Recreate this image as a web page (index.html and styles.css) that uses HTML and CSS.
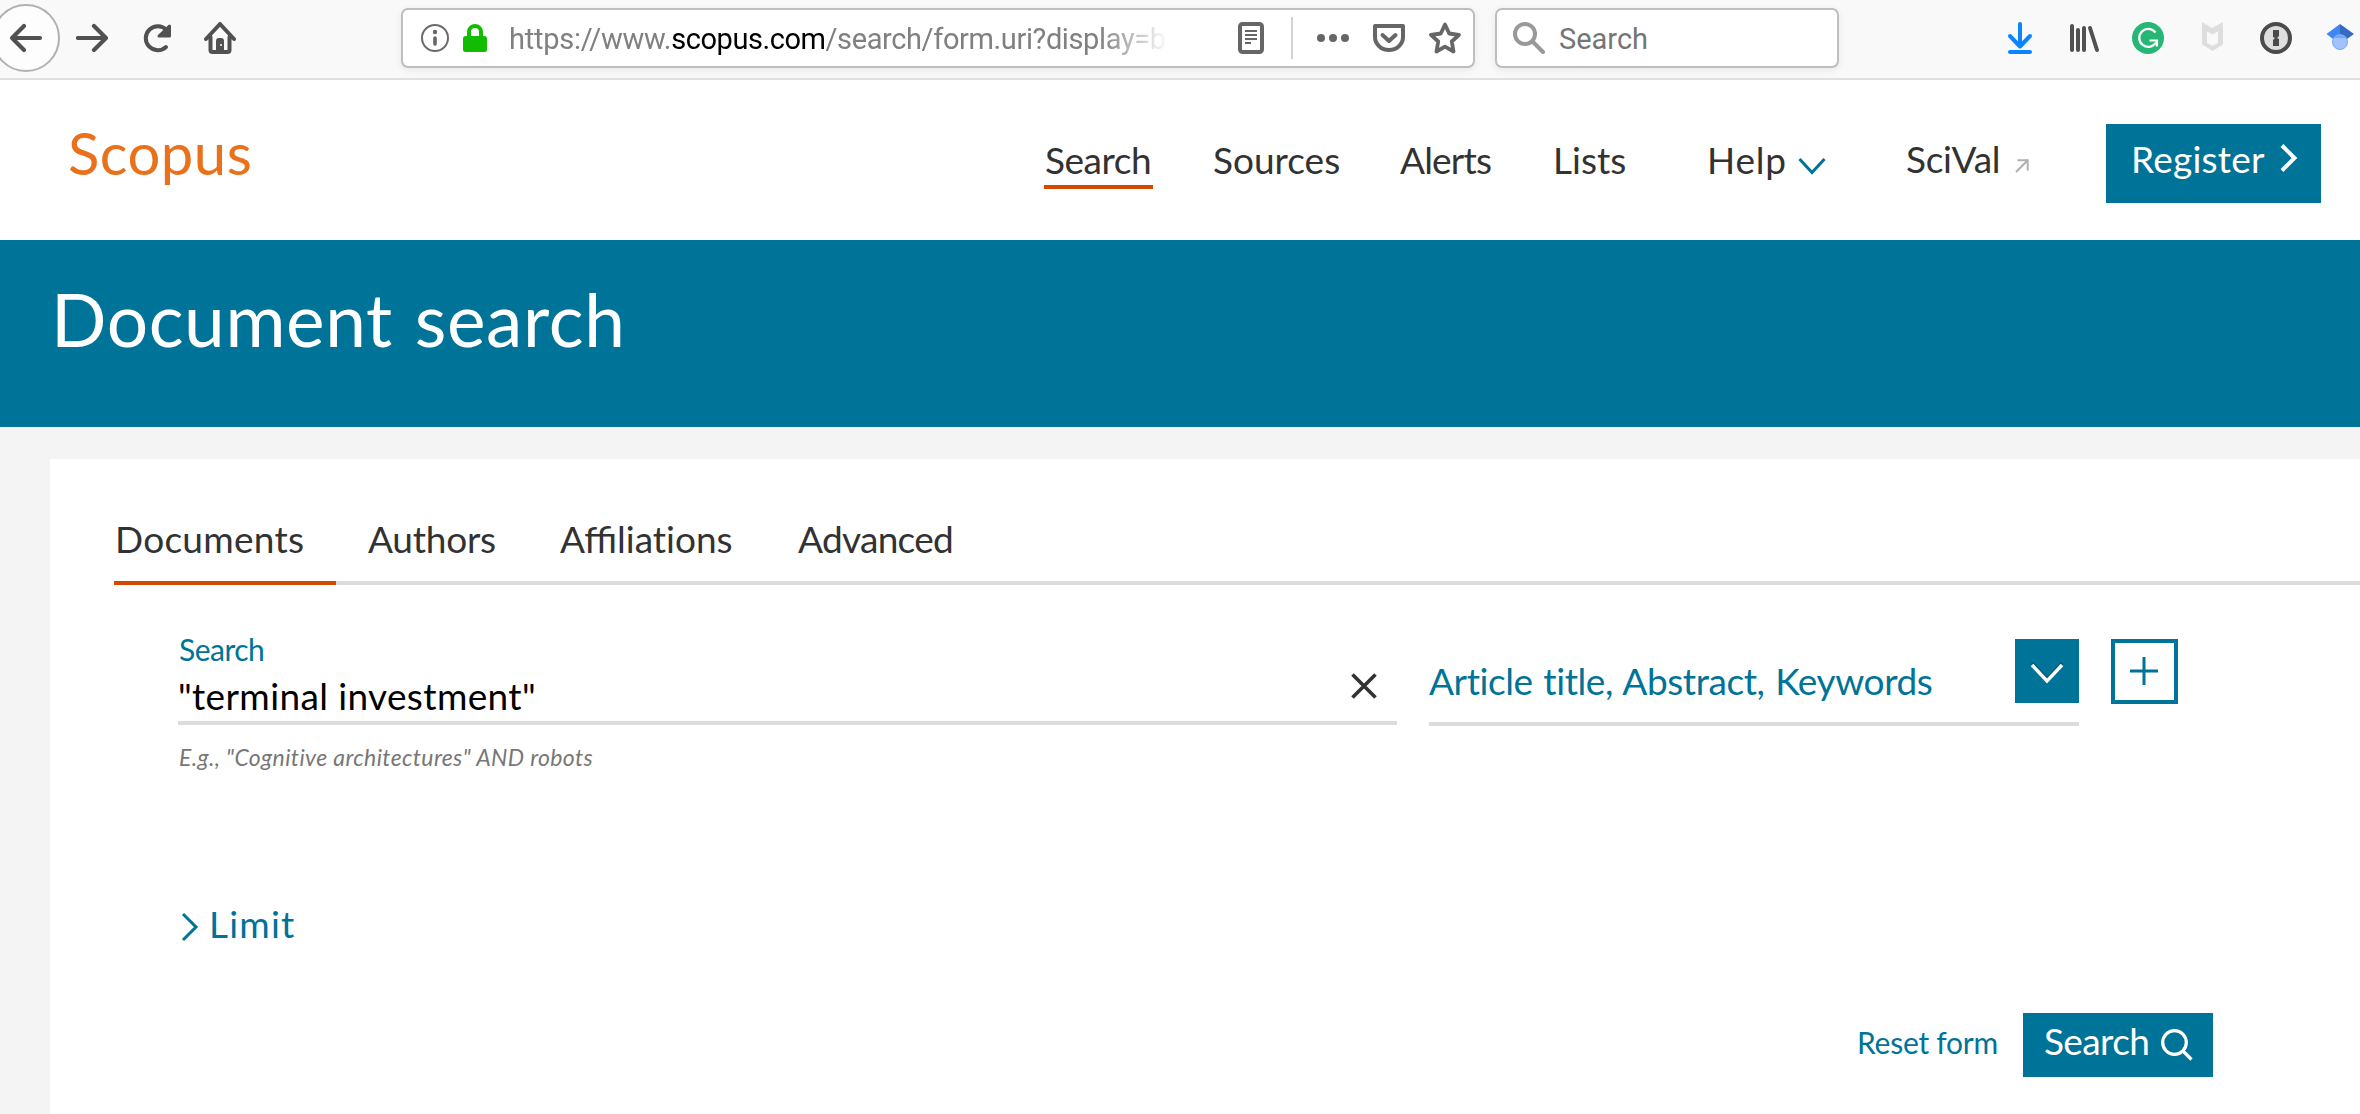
FILE: index.html
```
<!DOCTYPE html>
<html lang="en">
<head>
<meta charset="utf-8">
<title>Scopus - Document search</title>
<link rel="stylesheet" href="styles.css">
</head>
<body>
<div class="toolbar">
  <div class="history">
    <svg class="back" width="60" height="78" viewBox="0 0 60 78" fill="none"><circle cx="26" cy="38" r="33" fill="#fdfdfd" stroke="#b1b1b1" stroke-width="2"/><path d="M40 38H13M24 26L12 38l12 12" stroke="#515151" stroke-width="4.2" stroke-linecap="round" stroke-linejoin="round"/></svg>
    <svg class="forward" width="32" height="32" viewBox="0 0 32 32" fill="none" stroke="#515151" stroke-width="4.2" stroke-linecap="round" stroke-linejoin="round"><path d="M2 16h27M18 4l12 12-12 12"/></svg>
    <svg class="reload" width="32" height="32" viewBox="0 0 32 32" fill="none" stroke="#515151" stroke-width="4" stroke-linecap="round"><path d="M25 25A12 12 0 1 1 25.5 8"/><path d="M28.500 4v10H18z" fill="#515151" stroke-linejoin="round" stroke-width="3"/></svg>
    <svg class="home" width="32" height="32" viewBox="0 0 32 32"><path d="M2 17L16 2l14 15M6.500 15v13q0 2 2 2h15q2 0 2-2V15" fill="none" stroke="#515151" stroke-width="4" stroke-linecap="round" stroke-linejoin="round"/><path d="M12 30V19q0-3 3-3h2q3 0 3 3v11z" fill="#515151"/><circle cx="17" cy="23" r="1" fill="#fff"/></svg>
  </div>
  <div class="urlbar">
    <svg class="info" width="28" height="28" viewBox="0 0 28 28"><circle cx="14" cy="14" r="13" fill="none" stroke="#6b6b6b" stroke-width="2"/><circle cx="14" cy="8" r="2.200" fill="#666"/><path d="M14 14v6" stroke="#666" stroke-width="3.600" stroke-linecap="round"/></svg>
    <svg class="lock" width="24" height="28" viewBox="0 0 24 28"><path d="M6 14V8a6 6 0 0 1 12 0v6" fill="none" stroke="#12bc00" stroke-width="4"/><rect y="12" width="24" height="16" rx="2.500" fill="#12bc00"/></svg>
    <div class="address"><span class="scheme">https://www.</span><span class="domain">scopus.com</span><span class="path">/search/form.uri?display=b</span></div>
    <svg class="reader" width="26" height="32" viewBox="0 0 26 32" fill="none" stroke="#666"><rect x="2" y="2" width="22" height="28" rx="2.500" stroke-width="4"/><path d="M7 9h12M7 13h12M7 17h12M7 21h6" stroke-width="2"/></svg>
    <i class="divider"></i>
    <svg class="dots" width="32" height="32" viewBox="0 0 32 32" fill="#666"><circle cx="4" cy="16" r="4"/><circle cx="16" cy="16" r="4"/><circle cx="28" cy="16" r="4"/></svg>
    <svg class="pocket" width="32" height="32" viewBox="0 0 32 32" fill="none" stroke="#666" stroke-width="4" stroke-linejoin="round" stroke-linecap="round"><path d="M2 4h28v11a14 13 0 0 1-28 0z"/><path d="M9.500 13l6.500 6 6.500-6"/></svg>
    <svg class="star" width="32" height="32" viewBox="0 0 32 32" fill="none" stroke="#666" stroke-width="3.800" stroke-linejoin="round"><path d="M16 2.500l4.200 9 9.800 1.300-7.200 6.700 1.700 10L16 24.700l-8.500 4.800 1.700-10L2 12.800l9.800-1.300z"/></svg>
  </div>
  <div class="searchbar">
    <svg width="32" height="32" viewBox="0 0 32 32" fill="none" stroke="#999" stroke-width="4" stroke-linecap="round"><circle cx="12" cy="12" r="10"/><path d="M20 20l10 10"/></svg>
    <span>Search</span>
  </div>
  <div class="extensions">
    <svg width="32" height="32" viewBox="0 0 32 32" fill="none" stroke="#0a84ff" stroke-width="4" stroke-linecap="round" stroke-linejoin="round"><path d="M16 2v22M6 14l10 10.500L26 14M6 30h20"/></svg>
    <svg width="32" height="32" viewBox="0 0 32 32" fill="none" stroke="#515151" stroke-width="4" stroke-linecap="round"><path d="M4 4v24M10 8v20M16 6v22M22 6l7 22"/></svg>
    <svg width="32" height="32" viewBox="0 0 32 32" fill="none"><circle cx="16" cy="16" r="16" fill="#26b774"/><path d="M23.500 10.500A9 9 0 1 0 24 20.500M17.500 18.500H25v6" stroke="#fff" stroke-width="2.200"/></svg>
    <svg width="32" height="32" viewBox="0 0 32 32" fill="#dedede"><path d="M6 0l10 6L27 0v18.500l-5 2.500V9.500L16.500 12.500 11 9.500V21l-5-2.500zM6 18l10.500 6L27 18v4.500L16.500 29 6 22.500z"/></svg>
    <svg width="32" height="32" viewBox="0 0 32 32"><circle cx="16" cy="16" r="14" fill="#dedede" stroke="#4b4b4b" stroke-width="4"/><path d="M13 8h6v6l-2 2 2 1v7h-6v-6l2-2-2-1z" fill="#4b4b4b"/></svg>
    <svg width="32" height="32" viewBox="0 0 32 32"><path d="M2.500 12L16 2v18l-7-3z" fill="#4285f4"/><path d="M30 12L16 2v18l7-3z" fill="#356ac3"/><circle cx="16" cy="20" r="7.500" fill="#a0c3ff" stroke="#76a7fa" stroke-width="1"/><path d="M9.500 16a8 8 0 0 1 13 0z" fill="#76a7fa"/></svg>
  </div>
</div>

<header class="site-header">
  <a class="logo">Scopus</a>
  <nav class="main-nav">
    <a class="nav-item active">Search</a>
    <a class="nav-item sources">Sources</a>
    <a class="nav-item alerts">Alerts</a>
    <a class="nav-item">Lists</a>
    <a class="nav-item help">Help<svg width="28" height="18" viewBox="0 0 28 18" fill="none" stroke="#007398" stroke-width="3"><path d="M1.500 2L14 15.500 26.500 2"/></svg></a>
    <a class="nav-item scival">SciVal<svg width="14" height="14" viewBox="0 0 14 14" fill="none" stroke="#b0b0b0" stroke-width="2"><path d="M1 13L12.500 1.500M2.500 1.300h10.200v10.200"/></svg></a>
  </nav>
  <a class="register">Register<svg width="18" height="28" viewBox="0 0 18 28" fill="none" stroke="#fff" stroke-width="4"><path d="M2 1.500L14.500 14 2 26.500"/></svg></a>
</header>

<section class="banner"><h1>Document search</h1></section>

<main class="page">
  <section class="panel">
    <div class="tabs">
      <a class="tab selected">Documents</a>
      <a class="tab authors">Authors</a>
      <a class="tab">Affilia&zwnj;t&zwnj;ions</a>
      <a class="tab advanced">Advanced</a>
    </div>
    <form class="form">
      <div class="query">
        <div class="term">
          <label class="label">Search</label>
          <div class="value"><span>"terminal investment"</span><svg width="26" height="26" viewBox="0 0 26 26" stroke="#323232" stroke-width="3.600"><path d="M1.500 1.500l23 23M24.500 1.500l-23 23"/></svg></div>
          <p class="hint">E.g., "Cognitive architectures" AND robots</p>
        </div>
        <div class="scope">
          <span>Article title, Abstract, Keywords</span>
          <div class="drop"><svg width="34" height="22" viewBox="0 0 34 22" fill="none"><path d="M2 1l15 16L32 1" stroke="#00546f" stroke-width="3"/><path d="M2 3l15 16L32 3" stroke="#fff" stroke-width="3.400"/></svg></div>
        </div>
        <div class="add"><svg width="28" height="28" viewBox="0 0 28 28" stroke="#007398" stroke-width="3"><path d="M14 0v28M0 14h28"/></svg></div>
      </div>
      <div class="limit"><svg width="18" height="30" viewBox="0 0 18 30" fill="none" stroke="#007398" stroke-width="3"><path d="M2 2l13 13L2 28"/></svg><span>Limit</span></div>
      <div class="actions">
        <a class="reset">Reset form</a>
        <div class="submit">Search<svg width="32" height="32" viewBox="0 0 32 32" fill="none" stroke="#fff" stroke-width="3.200"><circle cx="13.500" cy="13.500" r="11.800"/><path d="M21.500 21.500l9 9"/></svg></div>
      </div>
    </form>
  </section>
</main>
</body>
</html>
```
FILE: styles.css
```
* { box-sizing: border-box; }

body {
  margin: 0;
  width: 2360px;
  height: 1114px;
  overflow: hidden;
  display: flex;
  flex-direction: column;
  background: #f4f4f4;
  color: #323232;
  font: 37px/44px Lato, sans-serif;
}

svg { display: block; flex: none; }

/* Browser toolbar */
.toolbar {
  flex: none;
  height: 80px;
  display: flex;
  align-items: flex-start;
  background: #f9f9f9;
  border-bottom: 2px solid #e0e0e0;
  font-family: Roboto, sans-serif;
  font-size: 29px;
}
.history { display: flex; align-items: flex-start; width: 401px; }
.forward { margin: 22px 0 0 16px; }
.reload { margin: 22px 0 0 33px; }
.home { margin: 22px 0 0 31px; }

.urlbar, .searchbar {
  height: 60px;
  margin-top: 8px;
  display: flex;
  align-items: center;
  background: #fff;
  border: 2px solid #bebebe;
  border-radius: 7px;
  box-shadow: 0 2px 8px rgba(0, 0, 0, .07);
}
.urlbar { width: 1074px; padding-left: 18px; }
.lock { margin-left: 14px; }
.address {
  width: 670px;
  margin: 2px 0 0 22px;
  white-space: nowrap;
  color: #808080;
  -webkit-mask-image: linear-gradient(to right, #000 590px, transparent 660px);
  mask-image: linear-gradient(to right, #000 590px, transparent 660px);
}
.scheme { letter-spacing: -.25px; }
.domain { color: #000; letter-spacing: -.45px; }
.path { letter-spacing: -.38px; }
.reader { margin-left: 59px; }
.divider { width: 2px; height: 42px; margin-left: 27px; background: #d2d2d2; }
.dots { margin-left: 24px; }
.pocket { margin-left: 24px; }
.star { margin-left: 24px; }

.searchbar { width: 344px; margin-left: 20px; padding-left: 16px; color: #757575; }
.searchbar span { margin: 2px 0 0 14px; }

.extensions { display: flex; gap: 32px; margin: 22px 0 0 165px; }

/* Site header */
.site-header {
  flex: none;
  height: 160px;
  display: flex;
  align-items: flex-start;
  background: #fff;
}
.logo {
  width: 976px;
  margin: 38px 0 0 68px;
  color: #e9711c;
  font-size: 58px;
  line-height: 70px;
  letter-spacing: .5px;
}
.main-nav {
  display: grid;
  grid-template-columns: 169px 187px 153px 154px 199px 200px;
  margin-top: 58px;
}
.nav-item { display: flex; align-items: flex-start; }
.nav-item.active {
  width: 109px;
  height: 51px;
  padding-left: 1px;
  border-bottom: 4px solid #d54800;
  letter-spacing: -.45px;
}
.alerts { letter-spacing: -.8px; }
.help { letter-spacing: .8px; }
.help svg { margin: 19px 0 0 11px; }
.scival { letter-spacing: -.3px; margin-top: -1px; }
.scival svg { margin: 22px 0 0 15px; }
.register {
  width: 215px;
  height: 79px;
  margin-top: 44px;
  padding: 13px 0 0 25px;
  display: flex;
  background: #007398;
  color: #fff;
  letter-spacing: .23px;
}
.register svg { margin: 7px 0 0 15px; }

.banner { flex: none; height: 187px; padding: 35px 0 0 51px; background: #007398; }
.banner h1 {
  margin: 0;
  color: #fff;
  font-size: 73px;
  font-weight: 400;
  line-height: 88px;
  letter-spacing: .62px;
  word-spacing: 2.500px;
}

/* Search panel */
.page { flex: 1; padding: 32px 0 0 50px; }
.panel { height: 655px; padding: 58px 0 0 64px; background: #fff; }
.tabs {
  display: grid;
  grid-template-columns: 254px 192px 238px auto;
  height: 68px;
  border-bottom: 4px solid #dcdcdc;
}
.tab.selected {
  width: 222px;
  height: 68px;
  padding-left: 1px;
  border-bottom: 4px solid #d54800;
  letter-spacing: .28px;
}
.authors { letter-spacing: -.24px; }
.advanced { letter-spacing: -.7px; }

.form { padding: 45px 0 0 64px; color: #007398; }
.query { display: grid; grid-template-columns: 1219px 650px 67px; column-gap: 32px; height: 141px; }
.label {
  display: block;
  height: 36px;
  padding: 1px 0 0 1px;
  font-size: 30px;
  line-height: 36px;
  letter-spacing: -.51px;
}
.value {
  height: 59px;
  padding: 8px 20px 0 0;
  display: flex;
  justify-content: space-between;
  border-bottom: 4px solid #dcdcdc;
  color: #000;
  letter-spacing: .37px;
}
.value svg { margin-top: -1px; }
.hint {
  margin: 18px 0 0 1px;
  color: #777;
  font-size: 23px;
  line-height: 28px;
  font-style: italic;
  letter-spacing: .38px;
}
.scope {
  height: 87px;
  margin-top: 9px;
  display: flex;
  justify-content: space-between;
  border-bottom: 4px solid #dcdcdc;
}
.scope span { margin-top: 20px; letter-spacing: -.4px; word-spacing: 1.500px; }
.drop { width: 64px; height: 64px; padding: 23px 0 0 15px; background: #007398; }
.add { width: 67px; height: 65px; margin-top: 9px; padding: 14px 0 0 15px; border: 4px solid #007398; }

.limit { display: flex; margin-top: 131px; padding-left: 3px; letter-spacing: 1.2px; }
.limit svg { margin-top: 10px; }
.limit span { margin-left: 10px; }

.actions { display: flex; margin: 67px 0 0 1679px; }
.reset { width: 166px; margin-top: 11px; font-size: 30px; line-height: 36px; letter-spacing: -.25px; }
.submit {
  width: 190px;
  height: 64px;
  padding: 6px 0 0 21px;
  display: flex;
  background: #007398;
  color: #fff;
  letter-spacing: -.6px;
}
.submit svg { margin: 10px 0 0 12px; }
```
